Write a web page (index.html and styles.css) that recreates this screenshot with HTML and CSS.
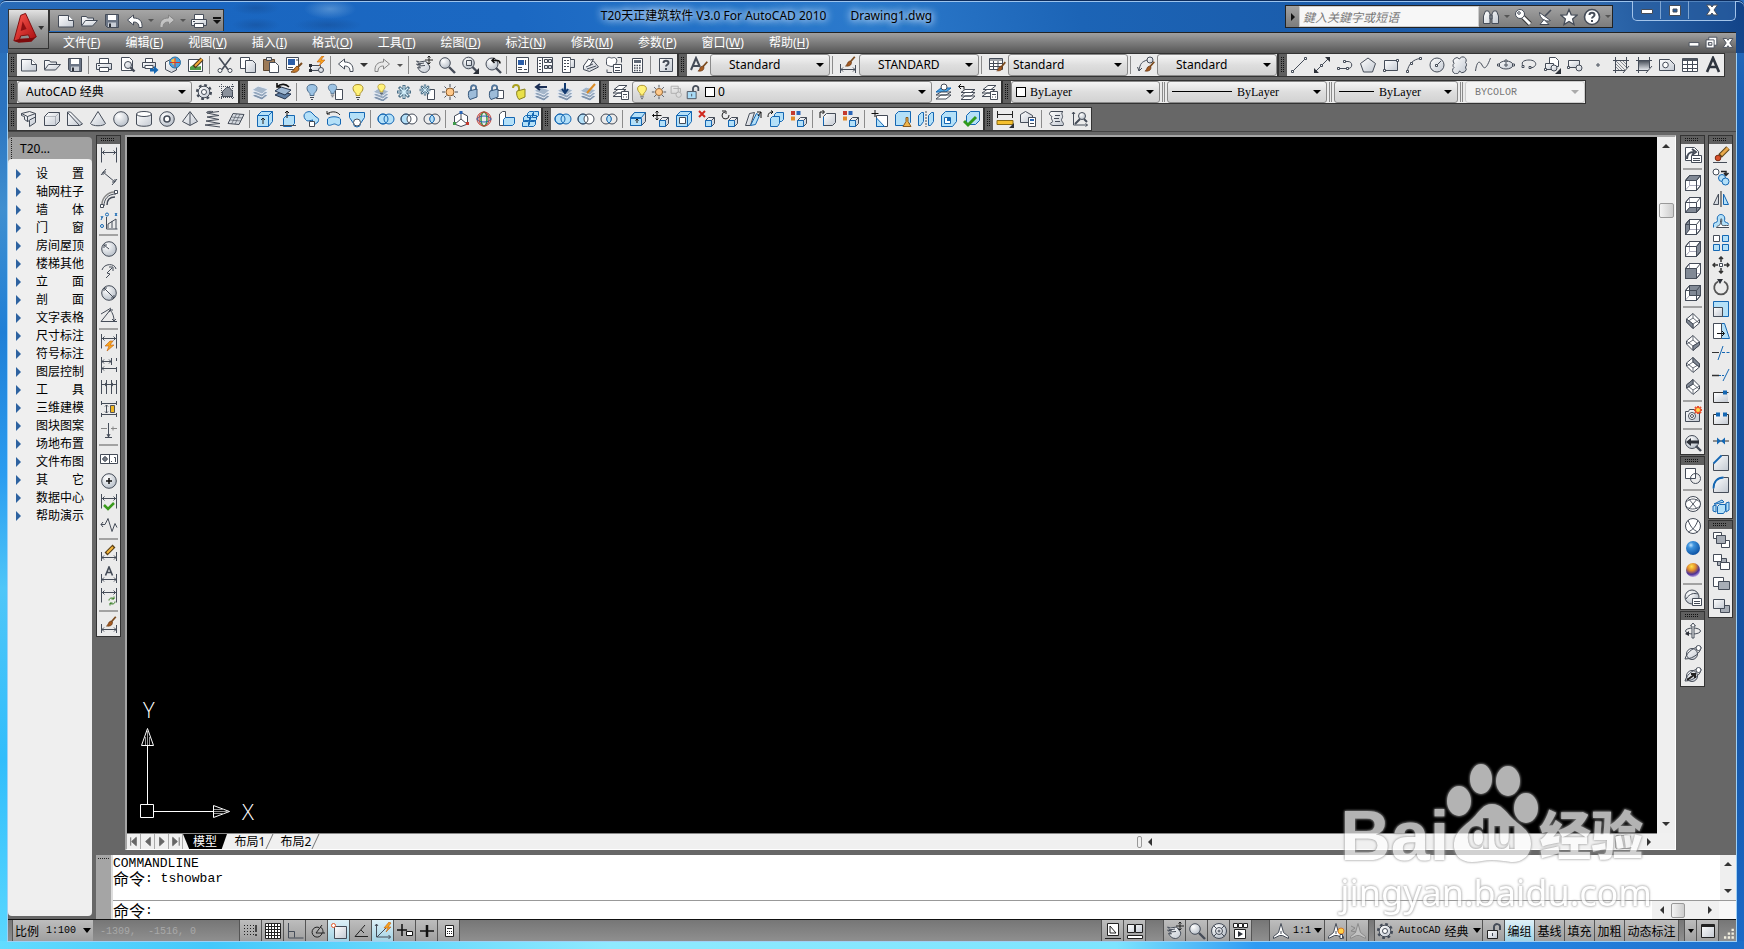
FILE: index.html
```html
<!DOCTYPE html>
<html lang="zh-CN">
<head>
<meta charset="utf-8">
<title>T20天正建筑软件 V3.0 For AutoCAD 2010</title>
<link rel="stylesheet" href="styles.css">
</head>
<body>
<svg class="defs" aria-hidden="true">
<defs>
<linearGradient id="gg" x1="0" y1="0" x2="1" y2="1"><stop offset="0" stop-color="#fff"/><stop offset="1" stop-color="#c3c9d2"/></linearGradient>
<linearGradient id="gd" x1="0" y1="0" x2="0" y2="1"><stop offset="0" stop-color="#4c535d"/><stop offset="1" stop-color="#e4e7ec"/></linearGradient>
<radialGradient id="gs" cx=".35" cy=".3" r=".7"><stop offset="0" stop-color="#fff"/><stop offset="1" stop-color="#bcc3cc"/></radialGradient>
<radialGradient id="gb" cx=".35" cy=".3" r=".7"><stop offset="0" stop-color="#bfe4ff"/><stop offset=".3" stop-color="#3d93dd"/><stop offset="1" stop-color="#0e55a6"/></radialGradient>
<radialGradient id="gy" cx=".4" cy=".25" r=".75"><stop offset="0" stop-color="#ffe14a"/><stop offset=".4" stop-color="#e08a2a"/><stop offset=".75" stop-color="#4b2f96"/><stop offset="1" stop-color="#b8a0e0"/></radialGradient>
<linearGradient id="gr" x1="0" y1="0" x2="1" y2="1"><stop offset="0" stop-color="#ff5a50"/><stop offset="1" stop-color="#a80d10"/></linearGradient>
</defs>
<symbol id="new" viewBox="0 0 18 18"><path class="g" d="M1.5 3.5h10l5 5v6.500h-15z"/><path class="w" d="M11.500 3.500v5h5"/></symbol>
<symbol id="open" viewBox="0 0 18 18"><path class="g" d="M1.500 13.500v-9h5l1 1.500h6v2.500"/><path class="g" d="M1.500 14l4-5.500h12l-5 5.500z"/></symbol>
<symbol id="save" viewBox="0 0 18 18"><path fill="#6b7585" d="M2.500 2.500h13v13h-11l-2-2z"/><path class="w" stroke="none" d="M5 3h8v5H5z"/><path fill="#c9ced6" stroke="none" d="M5 10.500h8V15H5z"/><path class="k" d="M6 11.500h2V15H6z"/></symbol>
<symbol id="print" viewBox="0 0 18 18"><path class="w" d="M4.500 7.500v-5h9v5"/><path class="g" d="M1.500 7.500h15v6h-15z"/><path class="w" d="M4.500 11.500h9v4h-9z"/><path d="M3 9.500h2"/></symbol>
<symbol id="preview" viewBox="0 0 18 18"><path class="w" d="M3.500 1.500h8l3 3v10h-11z"/><circle class="g" cx="10" cy="9" r="3.500"/><path class="th" d="M12.500 11.500l4 4"/></symbol>
<symbol id="plot" viewBox="0 0 18 18"><path class="w" d="M4.500 6.500v-4h7v4"/><path class="g" d="M1.500 6.500h13v5h-13z"/><path class="w" d="M4 9.500h8v3H4z"/><path class="bf" d="M9 12.500h4V10l4.500 4-4.500 4v-2.500H9z"/></symbol>
<symbol id="globe" viewBox="0 0 18 18"><path class="g" d="M1.500 6l6-3 5 2v9l-5 2.500-6-3z"/><circle cx="11" cy="6.500" r="5.500" fill="#4aa3df" stroke="#2b6f9f"/><path fill="#f6c244" stroke="none" d="M7 4l4-2 1 4-3 3z"/><path d="M11 2v9M6 6.500h10" stroke="#d23c2a"/></symbol>
<symbol id="markup" viewBox="0 0 18 18"><path class="w" d="M1.500 3.500h14v12h-14z"/><path fill="#4f9b45" stroke="none" d="M3 14v-3l3-2 3 2 5-1v4z"/><path stroke="#4b3a1e" stroke-width="4" d="M7 11l8-8"/><path stroke="#f5a935" stroke-width="2" d="M8 10l7-7"/></symbol>
<symbol id="cut" viewBox="0 0 18 18"><path stroke-width="1.600" d="M3 1.500l9 12M15 1.500l-9 12"/><circle class="w" cx="4" cy="14.500" r="2"/><circle class="w" cx="14" cy="14.500" r="2"/></symbol>
<symbol id="copy" viewBox="0 0 18 18"><path class="w" d="M1.500 1.500h9v11h-9z"/><path class="g" d="M6.500 4.500h7l3 3v9h-10z"/></symbol>
<symbol id="paste" viewBox="0 0 18 18"><path fill="#9c7a58" stroke="#5c4630" d="M1.500 3.500h11v11h-11z"/><path class="g" d="M4.500 1.500h5v3h-5z"/><path class="w" d="M7.500 6.500h6l3 3v7h-9z"/></symbol>
<symbol id="brush" viewBox="0 0 18 18"><path stroke="#7a4a1d" stroke-width="2.500" d="M17 1l-6 7"/><path fill="#a35a22" stroke="#5a3010" stroke-width=".8" d="M12.500 8.500c0 5-4 6-8.500 5.500 3-1 2-6 6-7z"/></symbol>
<symbol id="match" viewBox="0 0 18 18"><path class="w" d="M1.500 1.500h12v12h-12z"/><path fill="#2b5ea8" stroke="none" d="M3 3h7v6H3z"/><path d="M11 4h2M3 11.500h5"/><path stroke="#7a4a1d" stroke-width="2" d="M17 7l-4 4"/><path fill="#c87a2a" stroke="#7a4a1d" d="M14 12c0 4-4 5-8 4 3-1 3-4 6-6z"/></symbol>
<symbol id="bedit" viewBox="0 0 18 18"><path class="g" d="M2.500 9.500h10v5h-10z"/><circle class="g" cx="13" cy="14" r="2.500"/><path class="k" d="M1 8h3v3H1zM1 13h3v3H1z"/><path class="or" d="M14 0L9 6h4l-2 4 6-6h-4l3-4z"/></symbol>
<symbol id="undo" viewBox="0 0 18 18"><path class="w" d="M1.500 8l6-5v3c6 0 9 3 8.500 9.500h-3c0-4-2-5.500-5.500-5.500v3z"/></symbol>
<symbol id="redo" viewBox="0 0 18 18"><path fill="#e6e6e6" fill-opacity=".6" stroke="#858585" d="M16.500 8l-6-5v3c-6 0-9 3-8.500 9.500h3c0-4 2-5.500 5.500-5.500v3z"/></symbol>
<symbol id="pan" viewBox="0 0 18 18"><path class="g" d="M1.500 5l3 1 6-1 4 5c1 3-2 6.500-5 6.500-4 0-5-2-7-5l3 .5-4-4 4 1z"/><path d="M3 8l6-1M4 10l6-.500"/><path stroke="#222" d="M14 0v8M10 4h8M12.500 1.500L14 0l1.500 1.500M12.500 6.500L14 8l1.500-1.500"/></symbol>
<symbol id="zoom" viewBox="0 0 18 18"><circle class="s" cx="7" cy="7" r="5.300"/><path class="th" stroke-width="3" d="M11 11l6 6"/></symbol>
<symbol id="zoomw" viewBox="0 0 18 18"><circle class="s" cx="7.500" cy="7" r="5.800"/><path d="M5.500 4.500h5v5h-5z"/><path class="th" d="M11.500 11l4 4"/><path class="k" d="M18 12v6h-6z"/></symbol>
<symbol id="zoomp" viewBox="0 0 18 18"><circle class="s" cx="8" cy="8" r="6"/><path class="th" d="M12 12l5 5"/><path stroke="#111" stroke-width="1.500" d="M8 4.500h5c2 0 3 1 3 3M10.500 2L8 4.500 10.500 7"/></symbol>
<symbol id="props" viewBox="0 0 18 18"><path class="w" d="M3.500 1.500h12v15h-12z"/><path fill="#2b5ea8" stroke="none" d="M5 4h6v5H5z"/><path d="M12.500 4v5M5 11.500h4M5 13.500h4M11 13.500h3"/></symbol>
<symbol id="dc" viewBox="0 0 18 18"><path class="w" d="M1.500 1.500h15v15h-15z"/><path d="M6.500 2v14M3 4.500h2M3 7.500h2M3 10.500h2M3 13.500h2"/><path class="g" d="M8.500 3.500h3v3h-3zM12.500 3.500h3v3h-3zM8.500 9.500h3v3h-3zM12.500 9.500h3v3h-3z"/></symbol>
<symbol id="tp" viewBox="0 0 18 18"><path class="w" d="M3.500 1.500h8v15h-8z"/><path class="g" d="M11.500 3.500h4v8h-4"/><path d="M5 4.500h2M8 4.500h2M5 7.500h2M8 7.500h2M5 10.500h2M8 10.500h2M5 13.500h2"/></symbol>
<symbol id="ss" viewBox="0 0 18 18"><path class="g" d="M1.500 10l10-5 5 6-9 4.500-6-2z"/><path class="w" d="M1.500 10l5-7 2 1 3-1-4 7"/><path d="M4 11l7-3M5 13l9-3"/></symbol>
<symbol id="ms" viewBox="0 0 18 18"><path class="w" d="M1.500 3c2-3 4-1 5-1s3-1 4 0 2 3 1 4 0 4-2 4-3 1-5 0-3 0-3-3 0-3 0-4z"/><path class="w" d="M8.500 8.500h8v8h-8z"/><path d="M10 11.500h5M10 14.500h5M12.500 1.500h4v5M2 13.500v3h5"/></symbol>
<symbol id="calc" viewBox="0 0 18 18"><path class="w" d="M4.500 2.500h10v14h-10z"/><path fill="#5f6876" stroke="none" d="M6 4h7v3H6z"/><path stroke-dasharray="1.500 1" stroke-width="1.500" d="M6 9.500h7M6 12h7M6 14.500h7"/></symbol>
<symbol id="qp" viewBox="0 0 18 18"><path class="w" stroke="#222" d="M5.500 3.500h8v11h-8z"/><path stroke="#222" d="M7 6.500h5"/><path stroke="#222" stroke-dasharray="1 1" d="M7 9.500h5M7 11.500h5"/></symbol>
<symbol id="help" viewBox="0 0 18 18"><path class="g" d="M2.500 2.500h13v13h-13z"/><path stroke-width="2" d="M6.500 7c0-3 5-3 5 0 0 1.500-2.500 2-2.500 3.500M9 12v2"/></symbol>
<symbol id="tstyle" viewBox="0 0 18 18"><path stroke-width="2" d="M1 14L6 2l4 9M3 10h6"/><use href="#brush" x="5" y="5" width="13" height="13"/></symbol>
<symbol id="dstyle" viewBox="0 0 18 18"><path d="M1.500 8v9M16.500 9v8M2 13.500h14M4 11.500l-2 2 2 2M14 11.500l2 2-2 2"/><use href="#brush" x="3" y="0" width="14" height="13"/></symbol>
<symbol id="tbstyle" viewBox="0 0 18 18"><path class="w" d="M1.500 2.500h13v11h-13z"/><path d="M2 4h12M2 7.500h12M2 10.500h12M5.500 5v8M10 5v8"/><use href="#brush" x="6" y="5" width="12" height="13"/></symbol>
<symbol id="mlstyle" viewBox="0 0 18 18"><path d="M2 15c1-8 3-9 8-11M.500 11L2 15l3-3"/><circle class="g" cx="13" cy="4" r="3"/><use href="#brush" x="5" y="5" width="13" height="13"/></symbol>
<symbol id="line" viewBox="0 0 18 18"><path d="M3 15L15 3"/><path class="w" d="M1.500 14.500h2v2h-2zM14.500 1.500h2v2h-2z"/></symbol>
<symbol id="xline" viewBox="0 0 18 18"><path d="M3 15L15 3"/><path class="k" d="M1 17v-5l5 5zM17 1v5l-5-5z"/><path class="w" d="M7.500 8.500h2v2h-2z"/></symbol>
<symbol id="pline" viewBox="0 0 18 18"><path d="M8 5.500h4c5 0 5 7 0 7H2"/><path class="w" d="M1.500 11.500h2v2h-2zM10.500 11.500h2v2h-2zM7.500 4.500h2v2h-2z"/></symbol>
<symbol id="polygon" viewBox="0 0 18 18"><path class="g" d="M9 2l7.500 5.500-3 8.500h-9l-3-8.500z"/></symbol>
<symbol id="rect" viewBox="0 0 18 18"><path class="g" d="M2.500 4.500h13v10h-13z"/><path class="w" d="M1.500 13.500h2v2h-2zM14.500 3.500h2v2h-2z"/></symbol>
<symbol id="arc" viewBox="0 0 18 18"><path d="M2.500 15C3 9 8 3 15.500 2.500"/><path class="w" d="M1.500 14.500h2v2h-2zM5.500 6.500h2v2h-2zM14.500 1.500h2v2h-2z"/></symbol>
<symbol id="circle" viewBox="0 0 18 18"><circle class="g" cx="9" cy="9" r="7"/><path d="M9 9l4-4"/><path class="w" d="M7.500 8.500h2v2h-2z"/></symbol>
<symbol id="cloud" viewBox="0 0 18 18"><path class="g" d="M8.500 3a3.500 3.500 0 1 0-5.500 4.500 2.500 2.500 0 0 0 0 4 3.500 3.500 0 1 0 5.500 3.500 3.500 3.500 0 1 0 6-4 3 3 0 0 0 0-4.500 3.500 3.500 0 1 0-6-3.500z"/></symbol>
<symbol id="spline" viewBox="0 0 18 18"><path d="M1.500 15C3 4 6 5 8 9s4 5 8.500-7"/></symbol>
<symbol id="ellipse" viewBox="0 0 18 18"><ellipse class="g" cx="9" cy="9" rx="7" ry="4"/><path class="w" d="M.500 8h2v2h-2zM15.500 8h2v2h-2zM8 4h2v2H8zM8 8h2v2H8z"/></symbol>
<symbol id="ellarc" viewBox="0 0 18 18"><path d="M3 10C0 5 6 4 9 4c9 0 9 8 0 8"/><path class="w" d="M2 9.500h2v2H2zM9 10.500h2v2H9z"/></symbol>
<symbol id="insert" viewBox="0 0 18 18"><path class="w" d="M6.500 1.500h6l3 3v6h-9z"/><path class="g" d="M2.500 7.500h8v6h-8z"/><circle class="g" cx="11" cy="12" r="3"/><path class="w" d="M1.500 12.500h2v2h-2z"/><path class="k" d="M18 12v6h-6z"/></symbol>
<symbol id="block" viewBox="0 0 18 18"><path class="g" d="M2.500 4.500h11v7h-11z"/><circle class="g" cx="13" cy="12" r="3"/><path class="w" d="M1.500 10.500h2v2h-2z"/></symbol>
<symbol id="point" viewBox="0 0 18 18"><path class="w" d="M8 8h2v2H8z"/></symbol>
<symbol id="hatch" viewBox="0 0 18 18"><path d="M3.500 1v16M1 4.500h16M14.500 1v11M1 14.500h12"/><path stroke-width=".6" d="M4 8l6 6M4 5l9 9M8 5l6 6M4 11l3 3M11 5l3 3"/><path d="M11 17l6-7"/></symbol>
<symbol id="grad" viewBox="0 0 18 18"><path fill="url(#gd)" stroke="none" d="M4 5h10v9H4z"/><path d="M3.500 1v16M1 4.500h16M14.500 1v11M1 14.500h12M11 17l6-7"/></symbol>
<symbol id="region" viewBox="0 0 18 18"><path class="g" d="M1.500 3.500h10l5 5v6h-15z"/><circle class="w" cx="7.500" cy="9" r="2.800"/></symbol>
<symbol id="table" viewBox="0 0 18 18"><path class="w" d="M1.500 2.500h15v13h-15z"/><path fill="#4c535d" stroke="none" d="M2 2h14v3H2z"/><path d="M2 8.500h14M2 12.500h14M6.500 5v10M11.500 5v10"/></symbol>
<symbol id="mtext" viewBox="0 0 18 18"><path stroke="#2e343d" stroke-width="2.600" d="M3 16L9 2l6 14M5 11h8"/></symbol>
<symbol id="gear" viewBox="0 0 18 18"><circle cx="9" cy="9" r="6.800" stroke-width="2.500" stroke-dasharray="2.700 2.640"/><circle class="g" cx="9" cy="9" r="5.800"/><circle class="w" cx="9" cy="9" r="2.500"/></symbol>
<symbol id="wss" viewBox="0 0 18 18"><path stroke-dasharray="1 1" d="M3.500 1v16M14.500 1v16M1 3.500h16M1 14.500h16"/><path fill="#8a919c" d="M4.500 13.500v-5l4-4h3l3 4v5z"/></symbol>
<symbol id="layers" viewBox="0 0 18 18"><path fill="#7f93ab" stroke="#e8edf4" d="M1 13l6-4 10 3-6 5z"/><path fill="#92a6bd" stroke="#e8edf4" d="M1 10l6-4 10 3-6 5z"/><path fill="#a4b6ca" stroke="#e8edf4" d="M1 7l6-4 10 3-6 5z"/></symbol>
<symbol id="lay2" viewBox="0 0 18 18"><path fill="#5f7ea3" stroke="#273750" d="M1 12l6-3 10 2-6 5z"/><path fill="#9fb8d2" stroke="#273750" d="M1 8l6-4 10 3-6 5z"/><path stroke="#111" stroke-width="1.600" d="M3 4c4-4 9-3 12 0M3 0v4h4"/></symbol>
<symbol id="bulb" viewBox="0 0 18 18"><path fill="#9cc3e4" stroke="#4c6c8b" d="M9 1.500c6 0 6 5 3 8-1 1-1 1-1 3H7c0-2 0-2-1-3-3-3-3-8 3-8z"/><path d="M7 14.500h4M8 16.500h2"/></symbol>
<symbol id="bulb2" viewBox="0 0 18 18"><path class="w" d="M9.500 6.500h7v10h-7z"/><use href="#bulb" x="-1" width="15" height="15"/></symbol>
<symbol id="bulby" viewBox="0 0 18 18"><path fill="#fff27a" stroke="#a88f2a" d="M9 1.500c6 0 6 5 3 8-1 1-1 1-1 3H7c0-2 0-2-1-3-3-3-3-8 3-8z"/><path d="M7 14.500h4M8 16.500h2"/></symbol>
<symbol id="bulbl" viewBox="0 0 18 18"><use href="#layers" y="2" width="18" height="18"/><use href="#bulby" x="3" y="0" width="13" height="13"/></symbol>
<symbol id="frz" viewBox="0 0 18 18"><path stroke="#4c6f86" stroke-width="3" d="M9 2v14M2 9h14M4 4l10 10M14 4L4 14"/><path stroke="#d6f0fb" stroke-width="1.200" d="M9 3v12M3 9h12M5 5l8 8M13 5l-8 8"/></symbol>
<symbol id="frz2" viewBox="0 0 18 18"><path class="w" d="M9.500 6.500h7v10h-7z"/><use href="#frz" width="14" height="14"/></symbol>
<symbol id="sun" viewBox="0 0 18 18"><circle fill="#ffc98a" stroke="#8a5a2a" cx="9" cy="9" r="4"/><path d="M9 1v3M9 14v3M1 9h3M14 9h3M3.500 3.500l2 2M12.500 12.500l2 2M14.500 3.500l-2 2M5.500 12.500l-2 2"/></symbol>
<symbol id="lock" viewBox="0 0 18 18"><path stroke="#55779a" stroke-width="2" d="M7 8V5c0-4 6-3 5 0v3"/><path fill="#9dbcd9" stroke="#35567a" d="M5 8l8-2v8l-7 2.500c-2-2-2-6-1-8.500z"/></symbol>
<symbol id="lock2" viewBox="0 0 18 18"><path class="w" d="M9.500 7.500h7v8h-7z"/><use href="#lock" x="-2" width="18" height="18"/></symbol>
<symbol id="unlock" viewBox="0 0 18 18"><path stroke="#a9a020" stroke-width="2" d="M9 8V5c0-4-6-4-6 0"/><path fill="#e9e04a" stroke="#8a8320" d="M7 8l8-2v8l-6 2.500c-2-2-3-6-2-8.500z"/></symbol>
<symbol id="layl" viewBox="0 0 18 18"><use href="#layers" y="1" width="18" height="18"/><path stroke="#1c2f55" stroke-width="2" d="M3 4h11M7 1L3 4l4 3"/></symbol>
<symbol id="layd" viewBox="0 0 18 18"><use href="#layers" y="1" width="18" height="18"/><path stroke="#123a70" stroke-width="2" d="M9 0v9M6 6l3 4 3-4"/></symbol>
<symbol id="laye" viewBox="0 0 18 18"><use href="#layers" y="1" width="18" height="18"/><path stroke="#d98a24" stroke-width="2" d="M16 1L8 10"/></symbol>
<symbol id="layp" viewBox="0 0 18 18"><path class="w" d="M2 6.500l5-4h8l-5 4zM1 10l5-3.500h8L9 10zM1 13.500L6 10h8l-5 3.500z"/><path class="w" d="M9.500 8.500h7v8h-7z"/><path d="M11 11.500h4M11 14h1M14 14h1"/></symbol>
<symbol id="layc" viewBox="0 0 18 18"><path fill="#4aa6e6" stroke="#1467b3" d="M1 9l5-4h10l-5 4z"/><path class="w" d="M1 12l5-3h10l-5 3zM1 16l5-4h10l-5 4z"/><circle class="w" cx="9" cy="4" r="3"/></symbol>
<symbol id="layb" viewBox="0 0 18 18"><path class="w" d="M3 9.500l4-3h10l-4 3zM3 13l4-3.500h10L13 13zM3 16.500L7 13h10l-4 3.500z"/><path stroke="#111" d="M1 3.500h5v3M3 1L.500 3.500 3 6"/></symbol>
<symbol id="plock" viewBox="0 0 18 18"><path stroke-width="2" d="M9 8V5c0-4 7-4 6 1v2"/><path fill="#a9dcf7" d="M2.500 8.500h10v8h-10z"/><path d="M7.500 11v3"/></symbol>
<symbol id="ulock" viewBox="0 0 18 18"><path stroke-width="2" d="M9 8V5c0-4 7-4 6 1v2"/><path class="g" stroke="#222" d="M2.500 8.500h10v8h-10z"/><path d="M7.500 11v3"/></symbol>
<symbol id="vp" viewBox="0 0 18 18"><path stroke="#aaa" d="M3.500 2.500h8v8h-8zM6 5h8v4"/><circle fill="#ddd" stroke="#aaa" cx="12" cy="12" r="3"/></symbol>
<symbol id="psolid" viewBox="0 0 18 18"><path class="g" d="M1.500 3.500l6 3v5l-3-2v-3l-3-1zM7.500 6.500l8-3v9l-6 4v-6l-2 1z"/><path d="M1.500 3.500l8-2 6 2M9.500 10l6-3"/></symbol>
<symbol id="box" viewBox="0 0 18 18"><path class="g" d="M1.500 6.500l4-4h11v9l-4 4h-11z"/><path d="M1.500 6.500h11v9M12.500 6.500l4-4" opacity=".3"/></symbol>
<symbol id="wedge" viewBox="0 0 18 18"><path class="g" d="M1.500 2l3 0 12 12-3 1.500h-12z"/><path d="M1.500 2.500l12 13"/></symbol>
<symbol id="cone" viewBox="0 0 18 18"><path class="g" d="M9 1.500l7.500 12c-2 3-13 3-15 0z"/></symbol>
<symbol id="sphere" viewBox="0 0 18 18"><circle class="s" cx="9" cy="9" r="7.300"/></symbol>
<symbol id="cyl" viewBox="0 0 18 18"><path class="g" d="M1.500 4v10c0 3 15 3 15 0V4"/><ellipse class="w" cx="9" cy="4" rx="7.500" ry="2.500"/></symbol>
<symbol id="torus" viewBox="0 0 18 18"><circle class="s" cx="9" cy="9" r="7.300"/><circle class="w" cx="9" cy="9" r="3" stroke-width="1.600"/></symbol>
<symbol id="pyr" viewBox="0 0 18 18"><path class="g" d="M9 1.500l7.500 10L9 15.500l-7.500-4z"/><path d="M9 2v13"/></symbol>
<symbol id="helix" viewBox="0 0 18 18"><path d="M15 1.500L3 3l12 2.500L3 7l12 2.500L2 11l14 2.500L1 15l15 2M3 3c-1-1 0-2 6-1.500"/></symbol>
<symbol id="mesh" viewBox="0 0 18 18"><path fill="#d5dae0" d="M6 3.500l11 1-5 10-11-1z"/><path stroke-width=".6" d="M4.500 7l11 1M3 10l11 1M9.500 4l-5 10M13 4l-5 10"/></symbol>
<symbol id="ext" viewBox="0 0 18 18"><path class="b c" d="M1.500 5.500l4-4h11v10l-4 5h-11z"/><path class="b" d="M1.500 5.500h11v11M12.500 5.500l4-4"/><path stroke="#222" d="M7 14V8M5 10l2-2 2 2"/></symbol>
<symbol id="ppull" viewBox="0 0 18 18"><path class="b c" d="M4.500 8.500l3-3h8v8l-3 3h-8z"/><path d="M1 15.500h16"/><path stroke="#111" d="M8 8V1M6 3l2-2 2 2"/></symbol>
<symbol id="sweep" viewBox="0 0 18 18"><path class="b c" d="M2 6c0-4 5-5 7-4l5 5c3 1 3 3 2 5l-4 3-3-3 2-2-5 1c-2 0-4-3-4-5z"/><path class="w" d="M7.500 11.500h5v5h-5z"/></symbol>
<symbol id="rev" viewBox="0 0 18 18"><path class="b c" d="M2.500 9c2-3 11-3 13 0v5c-2 3-4 0-6 0s-6 3-7 0z"/><path stroke="#222" d="M2 4c4-3 10-3 13 1M2 1v3h3"/></symbol>
<symbol id="loft" viewBox="0 0 18 18"><path class="b c" d="M1.500 2.500h15v5l-4 6a3.500 3.500 0 0 1-7 0l-4-6z"/><circle class="w" cx="9" cy="12.500" r="3.500"/></symbol>
<symbol id="union" viewBox="0 0 18 18"><circle class="b c" cx="6" cy="9" r="5"/><circle class="b c" cx="12" cy="9" r="5"/><circle class="b" cx="6" cy="9" r="5"/></symbol>
<symbol id="sub" viewBox="0 0 18 18"><circle class="b c" cx="6" cy="9" r="5"/><circle class="w" cx="12" cy="9" r="5"/><circle cx="6" cy="9" r="5"/></symbol>
<symbol id="inter" viewBox="0 0 18 18"><circle cx="6" cy="9" r="5"/><circle cx="12" cy="9" r="5"/><path class="b c" d="M9 5c3 2 3 6 0 8-3-2-3-6 0-8z"/></symbol>
<symbol id="m3d" viewBox="0 0 18 18"><path class="w" d="M9 2.500l6.500 3.500v8L9 16.500 2.500 14V6z"/><path d="M9 3v6l-6 5M9 9l6 5"/><path fill="#2a66b8" stroke="none" d="M7.500 1h3v3h-3z"/><path fill="#c43a2e" stroke="none" d="M14 12h3v3h-3z"/><path fill="#3d9a4a" stroke="none" d="M1 12h3v3H1z"/></symbol>
<symbol id="r3d" viewBox="0 0 18 18"><circle cx="9" cy="9" r="7" stroke="#c43a2e"/><ellipse cx="9" cy="9" rx="3" ry="7" stroke="#3d9a4a" stroke-width="1.500"/><ellipse cx="9" cy="9" rx="7" ry="3" stroke="#2a66b8"/><ellipse cx="9" cy="9" rx="5" ry="7" stroke="#c43a2e"/></symbol>
<symbol id="a3d" viewBox="0 0 18 18"><path class="w" d="M1.500 4l3-2.500h3V11h8l-2 4.500h-12z"/><path class="b c" d="M5.500 9.500l2-2h9v6l-2 2h-9z"/></symbol>
<symbol id="ar3d" viewBox="0 0 18 18"><g class="b c"><path d="M6.500 3.500l2-2h4v4l-2 2h-4zM11.500 3.500l2-2h4v4l-2 2h-4zM2.500 7.500l2-2h5v4l-2 2h-5zM8.500 7.500l2-2h5v4l-2 2h-5zM1.500 12.500l2-2h5v4l-2 2h-5zM7.500 12.500l2-2h5v4l-2 2h-5z"/></g></symbol>
<symbol id="scube" viewBox="0 0 18 18"><path class="g" d="M7.500 10.500l3-3h6v6l-3 3h-6z"/><path class="b c" d="M7.500 10.500h6v6h-6z"/><path d="M13.500 10.500l3-3"/></symbol>
<symbol id="fext" viewBox="0 0 18 18"><path class="g" d="M1.500 7.500l4-5h11v9l-4 4h-11z"/><path class="b c" d="M1.500 8.500h11v7h-11zM1.500 7.500l4-5h11l-4 5z"/><path stroke="#111" d="M8 13V9M6.500 10.500L8 9l1.500 1.500"/></symbol>
<symbol id="fmove" viewBox="0 0 18 18"><use href="#scube" width="18" height="18"/><path stroke="#111" d="M5 1v9M.500 5.500h9M3.500 2.500L5 1l1.500 1.500M3.500 8.500L5 10l1.500-1.500M2 4L.500 5.500 2 7"/></symbol>
<symbol id="foff" viewBox="0 0 18 18"><path class="b c" d="M1.500 5.500l4-4h11v10l-4 5h-11z"/><path class="w" d="M4.500 7.500h6v6h-6z"/><path class="b" d="M1.500 5.500h11v11M12.500 5.500l4-4"/></symbol>
<symbol id="fdel" viewBox="0 0 18 18"><use href="#scube" width="18" height="18"/><path stroke="#d0281e" stroke-width="2" d="M1 1l6 6M7 1L1 7"/></symbol>
<symbol id="frot" viewBox="0 0 18 18"><use href="#scube" width="18" height="18"/><path stroke="#222" d="M4 2a3.500 3.500 0 1 0 4 3M1 1h4v3"/></symbol>
<symbol id="ftap" viewBox="0 0 18 18"><path class="g" d="M1.500 15.500l4-12 5-1-4 13z"/><path class="b c" d="M6.500 15.500l6-12 3 2-4 9z"/><path stroke="#111" d="M17 8V2h-4M17 2l-3 4"/></symbol>
<symbol id="fcopy" viewBox="0 0 18 18"><path class="b c" d="M7.500 4.500l2-2h7v7l-2 2h-7z"/><path class="b c" d="M3.500 8.500l2-2h7v7l-2 3h-7z"/><path stroke="#111" d="M1 7c0-4 2-5 5-5M4 .500L6 2 4 4"/></symbol>
<symbol id="fcol" viewBox="0 0 18 18"><use href="#scube" width="18" height="18"/><path fill="#c43a2e" stroke="none" d="M1 1h4v4H1z"/><path fill="#2a66b8" stroke="none" d="M6.500 1h4v4h-4z"/><path fill="#e08a2a" stroke="none" d="M1 6.500h4v4H1z"/></symbol>
<symbol id="ecopy" viewBox="0 0 18 18"><path class="g" d="M4.500 6.500l3-3h9v9l-3 3h-9z"/><path class="b" d="M4.500 7v9"/><path stroke="#111" d="M1 8V2h4M3.500 0l2 2-2 2"/></symbol>
<symbol id="impr" viewBox="0 0 18 18"><path class="w" d="M5.500 5.500h11v11h-11z"/><path class="b c" d="M5.500 8l8 8.500h-8z"/><path stroke="#111" d="M4 0v7M.500 3.500h7"/></symbol>
<symbol id="clean" viewBox="0 0 18 18"><path class="b c" d="M1.500 4.500l3-3h12v11l-3 3h-12z"/><path stroke="#8a5a1e" fill="#f0b54a" d="M12 7.500h2v4l3 5H9l3-5z"/></symbol>
<symbol id="sep3" viewBox="0 0 18 18"><path class="b c" d="M1.500 5.500l3-3h2v9l-3 4h-2zM11.500 5.500l3-3h2v9l-3 4h-2z"/><path stroke-dasharray="2 1" d="M9 1v16"/></symbol>
<symbol id="shell" viewBox="0 0 18 18"><path class="b c" d="M1.500 5.500l4-4h11v10l-4 5h-11z"/><path class="w b" d="M4.500 7.500h6v6h-6z"/><path fill="#1467b3" stroke="none" d="M7 8h3v3H7z"/></symbol>
<symbol id="chk3" viewBox="0 0 18 18"><path class="b c" d="M3.500 5.500l4-4h9v9l-4 4h-9z"/><path stroke="#2f9a1c" stroke-width="3" d="M1 11l4 4 8-8"/></symbol>
<symbol id="dist" viewBox="0 0 18 18"><path stroke="#222" d="M1.500 1v7M16.500 1v7M2 4.500h14"/><path fill="#f5c02e" stroke="#8a6a12" d="M1 10.500h16v4H1z"/><path class="k" d="M18 13v5h-5z"/></symbol>
<symbol id="mreg" viewBox="0 0 18 18"><path class="g" d="M1.500 12.500v-8l5-3 7 4v7z"/><path class="w" d="M9.500 7.500h7v9h-7z"/><path fill="#2a66b8" stroke="none" d="M11 9h4v2h-4z"/><path d="M11 13.500h4"/></symbol>
<symbol id="list" viewBox="0 0 18 18"><path class="g" d="M3 1.500h12c-3 2 1 4-1 7s3 4 1 7H5c-4-1-3-3-1-3 2-2-2-3 0-6-2-1-4-3-1-5z"/><path d="M7 5.500h5M6 8.500h5M7 11.500h5"/></symbol>
<symbol id="idp" viewBox="0 0 18 18"><path d="M2.500 2v13h14M1 4l1.500-2L4 4M14.500 13.500l2 1.500-2 1.500"/><circle class="s" cx="11" cy="6" r="3.500"/><path stroke-width="2" d="M9 9l-5 5M13 9l3 3"/></symbol>
<symbol id="dim" viewBox="0 0 18 18"><path d="M1.500 1.500v15M16.500 1.500v15"/><path d="M2 6.500h14M4.500 4.500l-2 2 2 2M13.500 4.500l2 2-2 2"/></symbol>
<symbol id="dal" viewBox="0 0 18 18"><path d="M3 4l12 10M1 7l5-6M12 17l5-6M3 7V4h3M15 11v3h-3"/></symbol>
<symbol id="darc" viewBox="0 0 18 18"><path stroke="#888" stroke-width="1.500" d="M2 14C2 8 8 2 14 2"/><path stroke-width="1.500" d="M7 15c0-5 3-8 8-8"/><path d="M4 16c0-7 4-12 12-12"/><path class="w" d="M.500 14.500h3v3h-3zM14.500.500h3v3h-3z"/></symbol>
<symbol id="dord" viewBox="0 0 18 18"><path d="M6.500 5v12h11M8 12l8-5v10M12 9v7M8 12v4"/><path class="b" d="M1 4l1 2M3 4l-2 4M15 1l2 3M17 1l-2 3"/><circle class="b" cx="2" cy="14" r="1.500"/><circle class="b" cx="7" cy="2.500" r="1.500"/></symbol>
<symbol id="drad" viewBox="0 0 18 18"><circle class="s" cx="9" cy="9" r="7.300"/><path d="M9 9L4 5M4 8V5h3"/></symbol>
<symbol id="djog" viewBox="0 0 18 18"><path d="M2 8c2-7 13-7 14-1M6 16l4-4-3-1 5-5M9 5h4v4"/></symbol>
<symbol id="ddia" viewBox="0 0 18 18"><circle class="s" cx="9" cy="9" r="7.300"/><path d="M4 4l10 10M4 7V4h3M14 11v3h-3"/></symbol>
<symbol id="dang" viewBox="0 0 18 18"><path d="M1 8l10-6M17 15.500H1L11 3M10 4c3 3 4 7 4 11M9 6l1-2h3M12 13l2 2 2-2"/></symbol>
<symbol id="dq" viewBox="0 0 18 18"><use href="#dim" y="-2" width="18" height="18"/><path class="or" d="M10 7l-5 5h4l-2 5 7-6h-4l3-4z"/></symbol>
<symbol id="dbase" viewBox="0 0 18 18"><path d="M1.500 1v16M11.500 2v7M16.500 2v3M16.500 11v5M2 5.500h9M2 12.500h14M4 3.500l-2 2 2 2M9 3.500l2 2-2 2M4 10.500l-2 2 2 2"/></symbol>
<symbol id="dcont" viewBox="0 0 18 18"><path d="M1.500 2v14M6.500 2v14M11.500 2v14M16.500 2v14M2 6.500h14M5 5l2 1.500L5 8M13 5l-2 1.500L13 8"/></symbol>
<symbol id="dspc" viewBox="0 0 18 18"><path d="M1.500 1v4M16.500 1v4M1.500 13v4M16.500 13v4M2 3.500h14M2 14.500h14M6.500 5v8M5 6.500L6.500 5 8 6.500M5 11.500L6.500 13 8 11.500"/><path fill="#f0b51e" stroke="#555" d="M10.500 5.500h4v7h-4z"/></symbol>
<symbol id="dbrk" viewBox="0 0 18 18"><path stroke="#888" d="M1 6.500h6M11 6.500h6M13 4.500v4"/><path d="M8.500 1v15M5 15.500h7M7 12l1.500 3 1.500-3"/></symbol>
<symbol id="tol" viewBox="0 0 18 18"><path class="w" d="M.500 4.500h17v9H.500z"/><path d="M9.500 5v8M2 9h6M5 6v6"/><circle cx="5" cy="9" r="2"/><path d="M11.500 11v1M14 7.500h1.500V12"/></symbol>
<symbol id="cmark" viewBox="0 0 18 18"><circle class="s" cx="9" cy="9" r="7.300"/><path stroke="#111" stroke-width="1.500" d="M9 6v6M6 9h6"/></symbol>
<symbol id="dins" viewBox="0 0 18 18"><use href="#dim" y="-2" width="18" height="18"/><path stroke="#3a9a1c" stroke-width="2.500" d="M4 11l4 4 6-6"/></symbol>
<symbol id="djl" viewBox="0 0 18 18"><path d="M1 8.500h4l3-6 4 13 3-8 2 4M3 6L1 8.500 3 11"/></symbol>
<symbol id="ded" viewBox="0 0 18 18"><path d="M1.500 8v9M16.500 8v9M2 13.500h14M4 11.500l-2 2 2 2M14 11.500l2 2-2 2"/><path stroke="#5a4016" stroke-width="4" d="M6 10l8-8"/><path stroke="#f5b53a" stroke-width="2" d="M7 9l6-6"/></symbol>
<symbol id="dtx" viewBox="0 0 18 18"><path d="M1.500 8v9M16.500 8v9M2 13.500h14M4 11.500l-2 2 2 2M14 11.500l2 2-2 2"/><path stroke-width="1.600" d="M5.500 9.500L9 1l3.500 8.500M7 6.500h4"/></symbol>
<symbol id="dup" viewBox="0 0 18 18"><use href="#dim" y="-2" width="18" height="18"/><path stroke="#2f7a1c" d="M9 12.500c0-3 4-3 5-1.500M15 13.500c0 3-4 3-5 1.500M14 8.500V11h-2.500M10 17.500V15h2.500"/></symbol>
<symbol id="vw" viewBox="0 0 18 18"><path class="w" d="M1.500 1.500h9l4 4v9h-13z"/><path stroke-width="2" d="M3 13c0-6 3-7 7-7M8 3l4 3-4 3"/><path class="w" d="M7.500 9.500h10v7h-10z"/><path d="M9 12.500h7M9 14.500h7"/></symbol>
<symbol id="cb" viewBox="0 0 18 18"><path class="w" d="M1.500 6.500l4-5h11v10l-4 5h-11z"/><path stroke="#aab" d="M5.500 2v9.500h11M1.500 16l4-4.500"/></symbol>
<symbol id="cl" viewBox="0 0 18 18"><path d="M1.500 6.500h11v10h-11zM1.500 6.500l4-5h11v10l-4 5M12.500 6.500l4-5"/></symbol>
<symbol id="cvt" viewBox="0 0 18 18"><use href="#cb"/><path class="m" d="M1.500 6.500l4-5h11l-4 5z"/><use href="#cl"/></symbol>
<symbol id="cvb" viewBox="0 0 18 18"><use href="#cb"/><path class="m" d="M1.500 16.500l4-5h11l-4 5z"/><use href="#cl"/></symbol>
<symbol id="cvl" viewBox="0 0 18 18"><use href="#cb"/><path class="m" d="M1.500 6.500l4-5v10l-4 5z"/><use href="#cl"/></symbol>
<symbol id="cvr" viewBox="0 0 18 18"><use href="#cb"/><path class="m" d="M12.500 6.500l4-5v10l-4 5z"/><use href="#cl"/></symbol>
<symbol id="cvf" viewBox="0 0 18 18"><use href="#cb"/><path class="m" d="M1.500 6.500h11v10h-11z"/><use href="#cl"/></symbol>
<symbol id="cvk" viewBox="0 0 18 18"><use href="#cb"/><path class="m" d="M5.500 1.500h11v10h-11z"/><use href="#cl"/></symbol>
<symbol id="iso" viewBox="0 0 18 18"><path class="w" d="M9 1.500L15.500 8v3L9 16.500 2.500 10V7z"/><path d="M2.500 7L9 12l6.500-4M9 12v4M9 1.500V6l6 5M9 6l-6 4" stroke-width=".8"/></symbol>
<symbol id="isw" viewBox="0 0 18 18"><use href="#iso"/><path class="m" d="M2.500 7L9 12v4.500L2.500 10z"/></symbol>
<symbol id="ise" viewBox="0 0 18 18"><use href="#iso"/><path class="m" d="M15.500 8L9 12v4.500l6.500-5.500z"/></symbol>
<symbol id="ine" viewBox="0 0 18 18"><use href="#iso"/><path class="m" d="M9 1.500L15.500 8v3L9 6z"/></symbol>
<symbol id="inw" viewBox="0 0 18 18"><use href="#iso"/><path class="m" d="M9 1.500L2.500 7v3L9 6z"/></symbol>
<symbol id="cam" viewBox="0 0 18 18"><path class="g" d="M1.500 5.500h3l1-2h5l1 2h4v10h-14z"/><circle class="w" cx="8" cy="10" r="3.500"/><circle cx="8" cy="10" r="1.500"/><path stroke="#e8502a" stroke-width="2" d="M14 0v8M10 4h8M11 1l6 6M17 1l-6 6"/><circle fill="#ffd84a" stroke="none" cx="14" cy="4" r="2"/></symbol>
<symbol id="vprev" viewBox="0 0 18 18"><circle class="s" cx="8" cy="8" r="6.500"/><path class="k" d="M2 8l5-4v2.500h8v3H7V12z"/><path class="th" d="M12 12l5 5"/></symbol>
<symbol id="vs1" viewBox="0 0 18 18"><path class="w" d="M1.500 1.500h10v10h-10z"/><circle cx="11.500" cy="11.500" r="5"/></symbol>
<symbol id="vs2" viewBox="0 0 18 18"><circle class="w" cx="9" cy="9" r="7.500"/><path stroke-width=".9" d="M4 3l10 12M14 3L4 15M2 7c5-4 9-4 14 0M2 11c3 4 10 4 14 0"/></symbol>
<symbol id="vs3" viewBox="0 0 18 18"><circle class="w" cx="9" cy="9" r="7.500"/><path d="M4 3c2 6 5 10 10 12M14 3c-2 6-5 10-10 12"/></symbol>
<symbol id="vs4" viewBox="0 0 18 18"><circle fill="url(#gb)" stroke="none" cx="9" cy="9" r="7"/></symbol>
<symbol id="vs5" viewBox="0 0 18 18"><circle fill="url(#gy)" stroke="none" cx="9" cy="9" r="7"/></symbol>
<symbol id="vs6" viewBox="0 0 18 18"><circle class="s" cx="8" cy="8" r="7"/><path d="M2 10c4-6 8-6 12-5"/><path class="w" d="M8.500 9.500h9v7h-9z"/><path d="M10 12.500h6M10 14.500h6"/></symbol>
<symbol id="orb1" viewBox="0 0 18 18"><ellipse cx="9" cy="9" rx="7.500" ry="3"/><path class="w" d="M8 16V4H6.500L9 1l2.500 3H10v12z"/><path class="k" d="M1 12l4-3v5z"/></symbol>
<symbol id="orb2" viewBox="0 0 18 18"><circle class="g" cx="8" cy="10" r="5.500"/><path d="M1 15C3 7 12 2 17 3c0 5-7 12-16 12z"/><circle class="w" cx="14.500" cy="4" r="2.500"/></symbol>
<symbol id="orb3" viewBox="0 0 18 18"><use href="#orb2"/><path stroke="#222" stroke-width="2" d="M3 14l7-5M7 8h4v4"/></symbol>
<symbol id="erase" viewBox="0 0 18 18"><path stroke="#5a4016" stroke-width="5" d="M8 10l8-8"/><path stroke="#e8a84a" stroke-width="3" d="M9 9l7-7"/><circle fill="#d8502a" stroke="#7a2a12" cx="6" cy="12" r="2.800"/><path d="M1 16.500h14"/></symbol>
<symbol id="cp" viewBox="0 0 18 18"><circle class="w" cx="4" cy="4" r="3"/><circle class="b c" cx="10" cy="10" r="3.500"/><circle class="b c" cx="13.500" cy="13.500" r="3.500"/><path stroke="#222" stroke-width="1.500" d="M9 3.500h5v3M12 5l2 2.500L16.500 5"/></symbol>
<symbol id="mir" viewBox="0 0 18 18"><path class="g" d="M1.500 14.500L6.500 4v10.500z"/><path class="b c" d="M11.500 14.500V4l5 10.500z"/><path stroke="#222" d="M9 1v16"/></symbol>
<symbol id="off" viewBox="0 0 18 18"><path class="b c" d="M1.500 15.500v-3c0-3 4-1 4-4-2-8 9-8 7 0 0 3 4 1 4 4"/><path class="w" d="M17 15.500H4.500c0-2 4-1 4-5 0-6 2-4 1 0 0 4 1 3 7 3"/></symbol>
<symbol id="arr" viewBox="0 0 18 18"><path class="w" d="M1.500 1.500h6v6h-6z"/><path class="b c" d="M10.500 1.500h6v6h-6zM1.500 10.500h6v6h-6zM10.500 10.500h6v6h-6z"/></symbol>
<symbol id="move" viewBox="0 0 18 18"><path stroke="#333" stroke-width="1.500" d="M9 6V1M9 12v5M6 9H1M12 9h5M7 3l2-2 2 2M7 15l2 2 2-2M3 7L1 9l2 2M15 7l2 2-2 2"/><path class="w" d="M7.500 7.500h3v3h-3z"/></symbol>
<symbol id="rot" viewBox="0 0 18 18"><path stroke="#555" stroke-width="1.800" d="M6 3.500a6.800 6.800 0 1 0 6 0"/><path class="k" d="M5 1h6L8 6z"/></symbol>
<symbol id="scale" viewBox="0 0 18 18"><path class="b c" d="M1.500 1.500h15v15h-15z"/><path class="g" d="M1.500 7.500h9v9h-9z"/></symbol>
<symbol id="str" viewBox="0 0 18 18"><path class="b c" d="M9.500 1.500h3l5 15h-8z"/><path class="w" d="M1.500 1.500h8v15h-8z"/><path stroke="#111" d="M5 11.500h7M10 9l2.500 2.500L10 14"/></symbol>
<symbol id="trim" viewBox="0 0 18 18"><path stroke="#333" d="M0 8.500h7"/><path class="b" d="M6 16l5-14"/><path class="b" stroke-dasharray="3 1.500" d="M10 8.500h8"/></symbol>
<symbol id="extd" viewBox="0 0 18 18"><path stroke="#333" stroke-width="1.500" d="M0 9.500h7"/><path class="b" stroke-dasharray="2 1" d="M7 9.500h5"/><path class="b" d="M11 15l6-12"/></symbol>
<symbol id="bp" viewBox="0 0 18 18"><path class="g" stroke="none" d="M2 5h14v9H2z"/><path stroke="#333" d="M17 14.500H1.500v-10h15"/><path class="bf" d="M11 2.500h4v4h-4z"/></symbol>
<symbol id="brk" viewBox="0 0 18 18"><path class="g" stroke="none" d="M2 5h14v10H2z"/><path stroke="#333" d="M5 4.500H1.500v10h15v-10H13"/><path class="bf" d="M4 2.500h4v4H4zM11 2.500h4v4h-4z"/></symbol>
<symbol id="join" viewBox="0 0 18 18"><path stroke="#333" d="M1 9h16"/><path class="bf" d="M5 5.500L9 9l-4 3.500zM13 5.500L9 9l4 3.500z"/></symbol>
<symbol id="cham" viewBox="0 0 18 18"><path class="g" d="M1.500 16.500v-7l8-8h7v15z"/><path class="b" stroke-width="1.800" d="M1.500 9.500l8-8"/></symbol>
<symbol id="fil" viewBox="0 0 18 18"><path class="g" d="M1.500 16.500v-4c0-7 4-11 10-11h5v15z"/><path class="b" stroke-width="1.800" d="M1.500 12.500c0-7 4-11 10-11"/></symbol>
<symbol id="expl" viewBox="0 0 18 18"><path class="b c" d="M5.500 8.500l2-2h6v6l-2 3h-6zM2 6l8-4 2 2-8 2zM1 8l3-1v7l-3-1zM14 5l3-1v8l-3 2z"/></symbol>
<symbol id="do1" viewBox="0 0 18 18"><path class="w" d="M1.500 1.500h8v6h-8zM9.500 9.500h8v7h-8z"/><path fill="#a7adb6" d="M4.500 4.500h9v8h-9z"/></symbol>
<symbol id="do2" viewBox="0 0 18 18"><path fill="#a7adb6" d="M5.500 5.500h9v7h-9z"/><path class="w" d="M1.500 1.500h8v7h-8zM8.500 9.500h9v7h-9z"/></symbol>
<symbol id="do3" viewBox="0 0 18 18"><path class="w" d="M1.500 2.500h10v9h-10z"/><path fill="#a7adb6" d="M6.500 6.500h11v8h-11z"/></symbol>
<symbol id="do4" viewBox="0 0 18 18"><path fill="#a7adb6" d="M8.500 8.500h9v7h-9z"/><path class="g" d="M1.500 2.500h11v9h-11z"/></symbol>
<symbol id="snap" viewBox="0 0 18 18"><path stroke-dasharray="1 2" stroke="#222" d="M2 3.500h10M2 6.500h10M2 9.500h10M2 12.500h10"/><path stroke="#222" stroke-width="1.500" stroke-dasharray="7 2" d="M14 3v11"/></symbol>
<symbol id="grid" viewBox="0 0 18 18"><path class="w" stroke="#222" d="M1.500 1.500h15v15h-15zM1.500 4.500h15M1.500 7.500h15M1.500 10.500h15M1.500 13.500h15M4.500 1.500v15M7.500 1.500v15M10.500 1.500v15M13.500 1.500v15"/></symbol>
<symbol id="orth" viewBox="0 0 18 18"><path d="M2.500 1v15h15M2.500 9.500h6v6"/></symbol>
<symbol id="polar" viewBox="0 0 18 18"><path stroke="#222" d="M11 5.500a5 5 0 1 0 3 5.500M8 11h9M8 11l6-8M12 5c3 1 3 4 3 6"/></symbol>
<symbol id="osnap" viewBox="0 0 18 18"><path class="g" d="M4.500 4.500h12v12h-12z"/><circle fill="#fff" stroke="#e2582a" cx="3.500" cy="3.500" r="2"/></symbol>
<symbol id="otr" viewBox="0 0 18 18"><path stroke="#222" d="M16 14.500H3L13 3M9 8l3 3"/></symbol>
<symbol id="ducs" viewBox="0 0 18 18"><path d="M2.500 2v13h14M1 4l1.500-2L4 4M14.500 13l2 2-2 2M3 15L12 6"/><path class="or" d="M15 0l-5 6h4l-2 4 5-5h-3l3-4z"/></symbol>
<symbol id="dyn" viewBox="0 0 18 18"><path stroke="#111" stroke-width="1.500" d="M1 8h10M6 2v12"/><path class="w" stroke="#111" d="M10.500 9.500h6v4h-6z"/></symbol>
<symbol id="lwt" viewBox="0 0 18 18"><path stroke="#111" stroke-width="1.500" d="M2 9h14"/><path stroke="#111" stroke-width="2.500" d="M9 3v12"/></symbol>
<symbol id="model" viewBox="0 0 18 18"><path class="w" stroke="#222" d="M3.500 1.500h11v12h-11z"/><path d="M6 4v7h6zM1 16.500h16" stroke="#222"/></symbol>
<symbol id="qvl" viewBox="0 0 18 18"><path class="g" stroke="#222" d="M1.500 2.500h7v8h-7zM9.500 2.500h7v8h-7z"/><path class="w" stroke="#222" d="M1.500 13.500h15v3h-15z"/></symbol>
<symbol id="wheel" viewBox="0 0 18 18"><circle class="s" cx="9" cy="9" r="7.500"/><circle cx="9" cy="9" r="3.500"/><path d="M3.500 3.500l3 3M14.500 3.500l-3 3M3.500 14.500l3-3M14.500 14.500l-3-3"/><circle cx="9" cy="9" r="1"/></symbol>
<symbol id="show" viewBox="0 0 18 18"><path class="w" stroke="#222" d="M1.500 1.500h4v4h-4zM6.500 1.500h4v4h-4zM11.500 1.500h4v4h-4zM2.500 7.500h11v9h-11z"/><path class="k" d="M6 9l5 3-5 3z"/></symbol>
<symbol id="ann" viewBox="0 0 18 18"><path class="w" d="M9 1.500l2.500 9 5 4v2l-6-3H7.500l-6 3v-2l5-4z"/><path d="M9 9v3"/></symbol>
<symbol id="ann2" viewBox="0 0 18 18"><use href="#ann"/><circle fill="#ffd24a" stroke="#d8782a" cx="14" cy="9" r="3"/><path class="w" d="M13 12.500h2.500v4H13z"/></symbol>
<symbol id="ann3" viewBox="0 0 18 18"><path fill="#c2c2c2" stroke="#8c8c8c" d="M9 1.500l2.500 9 5 4v2l-6-3H7.500l-6 3v-2l5-4z"/><path stroke="#888" d="M2 4l4 2-4 3 5 1"/></symbol>
<symbol id="max" viewBox="0 0 18 18"><path class="g" stroke="#222" d="M2.500 2.500h13v13h-13z"/><path stroke="#222" stroke-width="2" d="M3 4h12"/></symbol>
<symbol id="grip" viewBox="0 0 18 18"><path stroke="#f2efe0" stroke-width="2.500" stroke-dasharray="2.500 1.500" d="M14.500 5v12M10.500 9v8M6.500 13v4"/></symbol>
<symbol id="bino" viewBox="0 0 18 18"><path class="g" d="M1.500 15.500V8l2-5h3l1.500 3v9.500zM10 15.500V6l1.500-3h3l2 5v7.500zM8 7h2v4H8z"/></symbol>
<symbol id="key" viewBox="0 0 18 18"><path stroke="#333" stroke-width="5" d="M7 7l9 9"/><path stroke="#fff" stroke-width="3" d="M7 7l9 9"/><circle class="w" cx="6" cy="6" r="4.500"/><circle cx="5" cy="5" r="1.300"/></symbol>
<symbol id="sat" viewBox="0 0 18 18"><path class="w" d="M2.500 4.500c0 6 6 10 11 8z"/><path class="w" d="M3 16.500l4-5 5 5z"/><path stroke-width="1.600" d="M8 8l6-6"/></symbol>
<symbol id="star" viewBox="0 0 18 18"><path class="w" stroke-width="1.300" d="M9 1.500l2.200 5.300 5.800.4-4.400 3.700 1.400 5.600L9 13.400l-5 3.100 1.400-5.600L1 7.200l5.800-.4z"/></symbol>
<symbol id="qm" viewBox="0 0 18 18"><circle class="w" cx="9" cy="9" r="7.500" stroke-width="1.600"/><path stroke-width="2" d="M6.500 7c0-3 5-3 5 0 0 1.500-2.500 2-2.500 3.500M9 12v2"/></symbol>
<symbol id="wmin" viewBox="0 0 18 18"><path class="w" d="M3.500 8.500h11v4h-11z"/></symbol>
<symbol id="wmax" viewBox="0 0 18 18"><path class="w" fill-rule="evenodd" d="M3.500 4.500h11v10h-11zM7 8h4v3H7z"/></symbol>
<symbol id="wres" viewBox="0 0 18 18"><path class="w" d="M6.500 2.500h9v9h-9z"/><path class="w" fill-rule="evenodd" d="M3.500 5.500h9v9h-9zM6 8.500h4v3H6z"/></symbol>
<symbol id="wx" viewBox="0 0 18 18"><path class="w" d="M3.500 4h4L9 6l1.500-2h4L11 9l3.500 5h-4L9 12l-1.500 2h-4L7 9z"/></symbol>
</svg>

<header class="head">
  <button class="logo" aria-label="菜单浏览器"><svg viewBox="0 0 40 38"><path fill="url(#gr)" stroke="#7d0d0d" d="M12 5l5-2 11 24-6 3-2-5-8 1-2 6-5-1z"/><path fill="#8d1012" d="M14 11l4 8-6 2z"/><path fill="#7d0a0c" d="M5 31l6-2 15-1 2-1-5 5-13 1z"/><path fill="#333" d="M30 16h6l-3 4z"/></svg></button>
  <div class="title">
    <div class="qat">
      <button aria-label="新建"><svg><use href="#new"/></svg></button><button aria-label="打开"><svg><use href="#open"/></svg></button><button aria-label="保存"><svg><use href="#save"/></svg></button><button aria-label="放弃"><svg><use href="#undo"/></svg></button><button class="ar dim" aria-label="放弃列表"></button><button aria-label="重做"><svg><use href="#redo"/></svg></button><button class="ar dim" aria-label="重做列表"></button><button aria-label="打印"><svg><use href="#print"/></svg></button><button class="ar bar" aria-label="自定义"></button>
    </div>
    <h1><span>T20天正建筑软件 V3.0 For AutoCAD 2010</span><span>Drawing1.dwg</span></h1>
    <div class="info">
      <button class="exp" aria-label="展开"></button><input type="search" aria-label="搜索" placeholder="鍵入关鍵字或短语"><button aria-label="搜索"><svg><use href="#bino"/></svg></button><button class="ar dim" aria-label="搜索选项"></button><button aria-label="速博"><svg><use href="#key"/></svg></button><button aria-label="通讯中心"><svg><use href="#sat"/></svg></button><button aria-label="收藏夹"><svg><use href="#star"/></svg></button><button aria-label="帮助"><svg><use href="#qm"/></svg></button><button class="ar dim" aria-label="帮助选项"></button>
    </div>
    <div class="win"><button aria-label="最小化"><svg><use href="#wmin"/></svg></button><button aria-label="最大化"><svg><use href="#wmax"/></svg></button><button class="x" aria-label="关闭"><svg><use href="#wx"/></svg></button></div>
  </div>
  <nav class="menu">
    <a href="#">文件(<u>F</u>)</a><a href="#">编辑(<u>E</u>)</a><a href="#">视图(<u>V</u>)</a><a href="#">插入(<u>I</u>)</a><a href="#">格式(<u>O</u>)</a><a href="#">工具(<u>T</u>)</a><a href="#">绘图(<u>D</u>)</a><a href="#">标注(<u>N</u>)</a><a href="#">修改(<u>M</u>)</a><a href="#">参数(<u>P</u>)</a><a href="#">窗口(<u>W</u>)</a><a href="#">帮助(<u>H</u>)</a>
    <div class="mdi"><button aria-label="最小化图形"><svg><use href="#wmin"/></svg></button><button aria-label="还原图形"><svg><use href="#wres"/></svg></button><button aria-label="关闭图形"><svg><use href="#wx"/></svg></button></div>
  </nav>
</header>

<main class="client">
<div class="rows">
<div class="row">
  <div class="tb"><button aria-label="新建"><svg><use href="#new"/></svg></button><button aria-label="打开"><svg><use href="#open"/></svg></button><button aria-label="保存"><svg><use href="#save"/></svg></button><hr><button aria-label="打印"><svg><use href="#print"/></svg></button><button aria-label="打印预览"><svg><use href="#preview"/></svg></button><button aria-label="发布"><svg><use href="#plot"/></svg></button><button aria-label="三维DWF"><svg><use href="#globe"/></svg></button><button aria-label="标记"><svg><use href="#markup"/></svg></button><hr><button aria-label="剪切"><svg><use href="#cut"/></svg></button><button aria-label="复制"><svg><use href="#copy"/></svg></button><button aria-label="粘贴"><svg><use href="#paste"/></svg></button><button aria-label="特性匹配"><svg><use href="#match"/></svg></button><button aria-label="块编辑器"><svg><use href="#bedit"/></svg></button><hr><button aria-label="放弃"><svg><use href="#undo"/></svg></button><button class="ar" aria-label="放弃列表"></button><button aria-label="重做"><svg><use href="#redo"/></svg></button><button class="ar dim" aria-label="重做列表"></button><hr><button aria-label="平移"><svg><use href="#pan"/></svg></button><button aria-label="缩放"><svg><use href="#zoom"/></svg></button><button aria-label="窗口缩放"><svg><use href="#zoomw"/></svg></button><button aria-label="缩放上一个"><svg><use href="#zoomp"/></svg></button><hr><button aria-label="特性"><svg><use href="#props"/></svg></button><button aria-label="设计中心"><svg><use href="#dc"/></svg></button><button aria-label="工具选项板"><svg><use href="#tp"/></svg></button><button aria-label="图纸集"><svg><use href="#ss"/></svg></button><button aria-label="标记集"><svg><use href="#ms"/></svg></button><button aria-label="计算器"><svg><use href="#calc"/></svg></button><hr><button aria-label="帮助"><svg><use href="#help"/></svg></button></div>
  <div class="tb"><button aria-label="文字样式管理"><svg><use href="#tstyle"/></svg></button><span class="sel w120 in1"><select aria-label="文字样式"><option>Standard</option></select></span><hr><button aria-label="标注样式管理"><svg><use href="#dstyle"/></svg></button><span class="sel w120 in1"><select aria-label="标注样式"><option>STANDARD</option></select></span><hr><button aria-label="表格样式管理"><svg><use href="#tbstyle"/></svg></button><span class="sel w120"><select aria-label="表格样式"><option>Standard</option></select></span><hr><button aria-label="多重引线样式管理"><svg><use href="#mlstyle"/></svg></button><span class="sel w120 in1"><select aria-label="多重引线样式"><option>Standard</option></select></span></div>
  <div class="tb"><button aria-label="直线"><svg><use href="#line"/></svg></button><button aria-label="构造线"><svg><use href="#xline"/></svg></button><button aria-label="多段线"><svg><use href="#pline"/></svg></button><button aria-label="多边形"><svg><use href="#polygon"/></svg></button><button aria-label="矩形"><svg><use href="#rect"/></svg></button><button aria-label="圆弧"><svg><use href="#arc"/></svg></button><button aria-label="圆"><svg><use href="#circle"/></svg></button><button aria-label="修订云线"><svg><use href="#cloud"/></svg></button><button aria-label="样条曲线"><svg><use href="#spline"/></svg></button><button aria-label="椭圆"><svg><use href="#ellipse"/></svg></button><button aria-label="椭圆弧"><svg><use href="#ellarc"/></svg></button><button aria-label="插入块"><svg><use href="#insert"/></svg></button><button aria-label="创建块"><svg><use href="#block"/></svg></button><button aria-label="点"><svg><use href="#point"/></svg></button><button aria-label="图案填充"><svg><use href="#hatch"/></svg></button><button aria-label="渐变色"><svg><use href="#grad"/></svg></button><button aria-label="面域"><svg><use href="#region"/></svg></button><button aria-label="表格"><svg><use href="#table"/></svg></button><button aria-label="多行文字"><svg><use href="#mtext"/></svg></button></div>
</div>
<div class="row">
  <div class="tb"><span class="sel w175"><select aria-label="工作空间"><option>AutoCAD 经典</option></select></span><button aria-label="工作空间设置"><svg><use href="#gear"/></svg></button><button aria-label="我的工作空间"><svg><use href="#wss"/></svg></button></div>
  <div class="tb"><button aria-label="图层"><svg><use href="#layers"/></svg></button><button aria-label="图层转换"><svg><use href="#lay2"/></svg></button><hr><button aria-label="关闭图层"><svg><use href="#bulb"/></svg></button><button aria-label="关闭选择"><svg><use href="#bulb2"/></svg></button><button aria-label="打开图层"><svg><use href="#bulby"/></svg></button><button aria-label="全部打开"><svg><use href="#bulbl"/></svg></button><button aria-label="冻结"><svg><use href="#frz"/></svg></button><button aria-label="冻结选择"><svg><use href="#frz2"/></svg></button><button aria-label="解冻"><svg><use href="#sun"/></svg></button><button aria-label="锁定"><svg><use href="#lock"/></svg></button><button aria-label="锁定选择"><svg><use href="#lock2"/></svg></button><button aria-label="解锁"><svg><use href="#unlock"/></svg></button><button aria-label="图层恢复"><svg><use href="#layl"/></svg></button><button aria-label="合并图层"><svg><use href="#layd"/></svg></button><button aria-label="编辑图层"><svg><use href="#laye"/></svg></button></div>
  <div class="tb"><button aria-label="图层特性"><svg><use href="#layp"/></svg></button><span class="sel w300"><span class="lay"><svg><use href="#bulby"/></svg><svg><use href="#sun"/></svg><svg><use href="#vp"/></svg><svg><use href="#plock"/></svg><i></i></span><select aria-label="图层"><option>0</option></select></span><button aria-label="置为当前"><svg><use href="#layc"/></svg></button><button aria-label="上一个图层"><svg><use href="#layb"/></svg></button><button aria-label="图层状态"><svg><use href="#layp"/></svg></button></div>
  <div class="tb sim"><span class="sel w149 in2"><span class="lay"><i></i></span><select aria-label="颜色"><option>ByLayer</option></select></span><hr><span class="sel w160 in4"><span class="ln"></span><select aria-label="线型"><option>ByLayer</option></select></span><hr><span class="sel w124 in3"><span class="ln"></span><select aria-label="线宽"><option>ByLayer</option></select></span><hr><span class="sel w120 off"><select aria-label="打印样式" disabled><option>BYCOLOR</option></select></span></div>
</div>
<div class="row">
  <div class="tb"><button aria-label="多段体"><svg><use href="#psolid"/></svg></button><button aria-label="长方体"><svg><use href="#box"/></svg></button><button aria-label="楔体"><svg><use href="#wedge"/></svg></button><button aria-label="圆锥体"><svg><use href="#cone"/></svg></button><button aria-label="球体"><svg><use href="#sphere"/></svg></button><button aria-label="圆柱体"><svg><use href="#cyl"/></svg></button><button aria-label="圆环体"><svg><use href="#torus"/></svg></button><button aria-label="棱锥体"><svg><use href="#pyr"/></svg></button><button aria-label="螺旋"><svg><use href="#helix"/></svg></button><button aria-label="平面曲面"><svg><use href="#mesh"/></svg></button><hr><button aria-label="拉伸"><svg><use href="#ext"/></svg></button><button aria-label="按住并拖动"><svg><use href="#ppull"/></svg></button><button aria-label="扫掠"><svg><use href="#sweep"/></svg></button><button aria-label="旋转建模"><svg><use href="#rev"/></svg></button><button aria-label="放样"><svg><use href="#loft"/></svg></button><hr><button aria-label="并集"><svg><use href="#union"/></svg></button><button aria-label="差集"><svg><use href="#sub"/></svg></button><button aria-label="交集"><svg><use href="#inter"/></svg></button><hr><button aria-label="三维移动"><svg><use href="#m3d"/></svg></button><button aria-label="三维旋转"><svg><use href="#r3d"/></svg></button><button aria-label="三维对齐"><svg><use href="#a3d"/></svg></button><button aria-label="三维阵列"><svg><use href="#ar3d"/></svg></button></div>
  <div class="tb"><button aria-label="实体并集"><svg><use href="#union"/></svg></button><button aria-label="实体差集"><svg><use href="#sub"/></svg></button><button aria-label="实体交集"><svg><use href="#inter"/></svg></button><hr><button aria-label="拉伸面"><svg><use href="#fext"/></svg></button><button aria-label="移动面"><svg><use href="#fmove"/></svg></button><button aria-label="偏移面"><svg><use href="#foff"/></svg></button><button aria-label="删除面"><svg><use href="#fdel"/></svg></button><button aria-label="旋转面"><svg><use href="#frot"/></svg></button><button aria-label="倾斜面"><svg><use href="#ftap"/></svg></button><button aria-label="复制面"><svg><use href="#fcopy"/></svg></button><button aria-label="着色面"><svg><use href="#fcol"/></svg></button><hr><button aria-label="复制边"><svg><use href="#ecopy"/></svg></button><button aria-label="着色边"><svg><use href="#fcol"/></svg></button><hr><button aria-label="压印"><svg><use href="#impr"/></svg></button><button aria-label="清除"><svg><use href="#clean"/></svg></button><button aria-label="分割"><svg><use href="#sep3"/></svg></button><button aria-label="抽壳"><svg><use href="#shell"/></svg></button><button aria-label="检查"><svg><use href="#chk3"/></svg></button></div>
  <div class="tb"><button aria-label="距离"><svg><use href="#dist"/></svg></button><button aria-label="面域质量"><svg><use href="#mreg"/></svg></button><hr><button aria-label="列表"><svg><use href="#list"/></svg></button><button aria-label="定位点"><svg><use href="#idp"/></svg></button></div>
</div>
</div>

<div class="work">
  <aside class="pal"><h2>T20...</h2>
    <ul><li><a href="#">设　　置</a></li><li><a href="#">轴网柱子</a></li><li><a href="#">墙　　体</a></li><li><a href="#">门　　窗</a></li><li><a href="#">房间屋顶</a></li><li><a href="#">楼梯其他</a></li><li><a href="#">立　　面</a></li><li><a href="#">剖　　面</a></li><li><a href="#">文字表格</a></li><li><a href="#">尺寸标注</a></li><li><a href="#">符号标注</a></li><li><a href="#">图层控制</a></li><li><a href="#">工　　具</a></li><li><a href="#">三维建模</a></li><li><a href="#">图块图案</a></li><li><a href="#">场地布置</a></li><li><a href="#">文件布图</a></li><li><a href="#">其　　它</a></li><li><a href="#">数据中心</a></li><li><a href="#">帮助演示</a></li></ul>
  </aside>
  <div class="right">
    <div class="upper">
      <div class="vcol"><div class="tb v"><button aria-label="线性"><svg><use href="#dim"/></svg></button><button aria-label="对齐"><svg><use href="#dal"/></svg></button><button aria-label="弧长"><svg><use href="#darc"/></svg></button><button aria-label="坐标"><svg><use href="#dord"/></svg></button><hr><button aria-label="半径"><svg><use href="#drad"/></svg></button><button aria-label="折弯"><svg><use href="#djog"/></svg></button><button aria-label="直径"><svg><use href="#ddia"/></svg></button><button aria-label="角度"><svg><use href="#dang"/></svg></button><hr><button aria-label="快速标注"><svg><use href="#dq"/></svg></button><button aria-label="基线"><svg><use href="#dbase"/></svg></button><button aria-label="连续"><svg><use href="#dcont"/></svg></button><button aria-label="等距标注"><svg><use href="#dspc"/></svg></button><button aria-label="折断标注"><svg><use href="#dbrk"/></svg></button><hr><button aria-label="公差"><svg><use href="#tol"/></svg></button><button aria-label="圆心标记"><svg><use href="#cmark"/></svg></button><button aria-label="检验"><svg><use href="#dins"/></svg></button><button aria-label="折弯线性"><svg><use href="#djl"/></svg></button><hr><button aria-label="编辑标注"><svg><use href="#ded"/></svg></button><button aria-label="编辑标注文字"><svg><use href="#dtx"/></svg></button><button aria-label="标注更新"><svg><use href="#dup"/></svg></button><hr><button aria-label="标注样式"><svg><use href="#dstyle"/></svg></button></div></div>
      <section class="frame" aria-label="绘图区">
        <div class="canvas">
          <svg class="ucs" width="130" height="140"><g fill="none" stroke="#fff"><path d="M5.500 114.500h13v13h-13zM12.500 114v-58M19 121.500h59"/><path d="M6.500 55.500l6-17 6 17zM78.500 115.500v12l16-6z"/><path stroke="#999" d="M10.500 55v-8M12.500 55V41M14.500 55v-8M79 119.500h10M79 121.500h14M79 123.500h10"/></g><text x="8" y="28">Y</text><text x="107" y="130">X</text></svg>
        </div>
        <div class="vsb"><i class="up"></i><b></b><i class="dn"></i></div>
        <div class="tabs"><button class="nv" aria-label="第一个"><svg viewBox="0 0 14 14"><path d="M4 2v9M10 2v9L5 6.500z"/></svg></button><button class="nv" aria-label="上一个"><svg viewBox="0 0 14 14"><path d="M10 2v9L5 6.500z"/></svg></button><button class="nv" aria-label="下一个"><svg viewBox="0 0 14 14"><path d="M5 2v9l5-4.500z"/></svg></button><button class="nv" aria-label="最后一个"><svg viewBox="0 0 14 14"><path d="M4 2v9l5-4.500zM11 2v9"/></svg></button><button class="tab on">模型</button><button class="tab">布局1</button><button class="tab">布局2</button><div class="hsb"><s></s><i class="lf"></i><em></em><b></b><i class="rt"></i></div></div>
        <div class="corner"></div>
      </section>
      <div class="vcol a">
        <div class="tb v"><button aria-label="命名视图"><svg><use href="#vw"/></svg></button><hr><button aria-label="俯视"><svg><use href="#cvt"/></svg></button><button aria-label="仰视"><svg><use href="#cvb"/></svg></button><button aria-label="左视"><svg><use href="#cvl"/></svg></button><button aria-label="右视"><svg><use href="#cvr"/></svg></button><button aria-label="前视"><svg><use href="#cvf"/></svg></button><button aria-label="后视"><svg><use href="#cvk"/></svg></button><hr><button aria-label="西南等轴测"><svg><use href="#isw"/></svg></button><button aria-label="东南等轴测"><svg><use href="#ise"/></svg></button><button aria-label="东北等轴测"><svg><use href="#ine"/></svg></button><button aria-label="西北等轴测"><svg><use href="#inw"/></svg></button><hr><button aria-label="相机"><svg><use href="#cam"/></svg></button><hr><button aria-label="上一个视图"><svg><use href="#vprev"/></svg></button></div>
        <div class="tb v"><button aria-label="二维线框"><svg><use href="#vs1"/></svg></button><hr><button aria-label="三维线框"><svg><use href="#vs2"/></svg></button><button aria-label="三维隐藏"><svg><use href="#vs3"/></svg></button><button aria-label="真实"><svg><use href="#vs4"/></svg></button><button aria-label="概念"><svg><use href="#vs5"/></svg></button><hr><button aria-label="视觉样式管理"><svg><use href="#vs6"/></svg></button></div>
        <div class="tb v"><button aria-label="受约束的动态观察"><svg><use href="#orb1"/></svg></button><button aria-label="自由动态观察"><svg><use href="#orb2"/></svg></button><button aria-label="连续动态观察"><svg><use href="#orb3"/></svg></button></div>
      </div>
      <div class="vcol c2">
        <div class="tb v"><button aria-label="删除"><svg><use href="#erase"/></svg></button><button aria-label="复制对象"><svg><use href="#cp"/></svg></button><button aria-label="镜像"><svg><use href="#mir"/></svg></button><button aria-label="偏移"><svg><use href="#off"/></svg></button><button aria-label="阵列"><svg><use href="#arr"/></svg></button><button aria-label="移动"><svg><use href="#move"/></svg></button><button aria-label="旋转"><svg><use href="#rot"/></svg></button><button aria-label="缩放对象"><svg><use href="#scale"/></svg></button><button aria-label="拉伸对象"><svg><use href="#str"/></svg></button><button aria-label="修剪"><svg><use href="#trim"/></svg></button><button aria-label="延伸"><svg><use href="#extd"/></svg></button><button aria-label="打断于点"><svg><use href="#bp"/></svg></button><button aria-label="打断"><svg><use href="#brk"/></svg></button><button aria-label="合并"><svg><use href="#join"/></svg></button><button aria-label="倒角"><svg><use href="#cham"/></svg></button><button aria-label="圆角"><svg><use href="#fil"/></svg></button><button aria-label="分解"><svg><use href="#expl"/></svg></button></div>
        <div class="tb v"><button aria-label="前置"><svg><use href="#do1"/></svg></button><button aria-label="后置"><svg><use href="#do2"/></svg></button><button aria-label="置于对象之上"><svg><use href="#do3"/></svg></button><button aria-label="置于对象之下"><svg><use href="#do4"/></svg></button></div>
      </div>
    </div>
    <section class="cmd" aria-label="命令行">
      <div class="hist"><p>COMMANDLINE</p><p><span>命令</span>: tshowbar</p></div>
      <div class="vsb"><i class="up"></i><i class="dn"></i></div>
      <label class="prompt"><span>命令</span>:<input type="text" aria-label="命令"></label>
      <div class="chs"><i class="lf"></i><b></b><em></em><i class="rt"></i></div>
    </section>
  </div>
</div>

<footer class="stat">
  <button class="scale">比例<span>1:100</span><i></i></button><div class="coord">-1309,&nbsp; -1516, 0</div>
  <button aria-label="捕捉"><svg><use href="#snap"/></svg></button><button aria-label="栅格"><svg><use href="#grid"/></svg></button><button aria-label="正交"><svg><use href="#orth"/></svg></button><button aria-label="极轴"><svg><use href="#polar"/></svg></button><button class="on" aria-label="对象捕捉"><svg><use href="#osnap"/></svg></button><button aria-label="对象追踪"><svg><use href="#otr"/></svg></button><button class="on" aria-label="动态UCS"><svg><use href="#ducs"/></svg></button><button aria-label="动态输入"><svg><use href="#dyn"/></svg></button><button aria-label="线宽"><svg><use href="#lwt"/></svg></button><button aria-label="快捷特性"><svg><use href="#qp"/></svg></button>
  <div class="grow"></div>
  <button aria-label="模型"><svg><use href="#model"/></svg></button><button aria-label="快速查看布局"><svg><use href="#qvl"/></svg></button><div class="gap"></div>
  <button aria-label="平移"><svg><use href="#pan"/></svg></button><button aria-label="缩放"><svg><use href="#zoom"/></svg></button><button aria-label="控制盘"><svg><use href="#wheel"/></svg></button><button aria-label="运动"><svg><use href="#show"/></svg></button><div class="gap"></div>
  <button class="wide"><svg><use href="#ann"/></svg><span>1:1</span><i></i></button><button aria-label="注释可见性"><svg><use href="#ann2"/></svg></button><button aria-label="自动缩放"><svg><use href="#ann3"/></svg></button><div class="gap s"></div>
  <button class="ws"><svg><use href="#gear"/></svg><span>AutoCAD</span>经典<i></i></button><button aria-label="锁定"><svg><use href="#ulock"/></svg></button><button class="t on">编组</button><button class="t">基线</button><button class="t">填充</button><button class="t">加粗</button><button class="t t4">动态标注</button><div class="gap s"></div><button class="nar" aria-label="状态栏菜单"><i></i></button><button aria-label="全屏显示"><svg><use href="#max"/></svg></button><div class="rs"><svg><use href="#grip"/></svg></div>
</footer>
</main>

<div class="mark" aria-hidden="true">
  <div class="m1"><span>Bai</span><svg viewBox="0 0 94 100"><mask id="mk"><rect width="94" height="100" fill="#fff"/><text x="21" y="86" fill="#000">du</text></mask><g fill="#fff"><ellipse cx="14" cy="38" rx="12" ry="15"/><ellipse cx="36" cy="16" rx="11" ry="15"/><ellipse cx="63" cy="18" rx="12" ry="15"/><ellipse cx="81" cy="45" rx="12" ry="15"/><path mask="url(#mk)" d="M47 41c9 0 13 7 20 14 8 8 19 12 19 26 0 13-11 19-20 18-7-1-12-2-19-2s-13 2-20 2C15 99 8 91 9 80c1-12 11-17 19-25 7-7 10-14 19-14z"/></g></svg><b>经验</b></div>
  <div class="m2">jingyan.baidu.com</div>
</div>
</body>
</html>
```
FILE: styles.css
```css
*, *::before, *::after { box-sizing: border-box; }
html, body { margin: 0; height: 100%; }
body {
  display: flex;
  flex-direction: column;
  padding: 0 8px 8px;
  position: relative;
  overflow: hidden;
  font: 12px/18px "Noto Sans", "Noto Sans CJK SC", sans-serif;
  color: #000;
  background:
    linear-gradient(90deg, #62dcff 0, #43c8fb 12%, #8feaff 35%, #7de4ff 64%, #2f9bf3 72%, #2380dd 90%, #1c6fca) bottom / 100% 8px no-repeat,
    linear-gradient(#2b70bf 0, #1a60b4 10%, #1653a0 40%, #1451a1 70%, #1b6bc8) right / 8px 100% no-repeat,
    linear-gradient(#2a6db8 0, #2b74c0 12%, #3f8fd0 22%, #1f7fd6 35%, #2a9cf0 50%, #4fc6f8 62%, #31bdfb 80%, #5bd8ff) left / 8px 100% no-repeat,
    #1b5fae;
}
button { padding: 0; border: 0; background: none; font: inherit; color: inherit; display: flex; align-items: center; justify-content: center; flex: none; }
svg { fill: none; stroke: #454c58; }
button svg { width: 18px; height: 18px; display: block; }
.defs { position: absolute; width: 0; height: 0; }
.g { fill: url(#gg); }
.s { fill: url(#gs); }
.w { fill: #fff; }
.k { fill: #2c3038; stroke: none; }
.m { fill: #818995; }
.b { stroke: #1467b3; }
.c { fill: #b4e0f8; }
.bf { fill: #1467b3; stroke: none; }
.or { fill: #f8a51c; stroke: #c05c10; stroke-width: .6; }
.th { stroke-width: 2.4; }

/* window header */
.head {
  display: grid;
  grid-template-columns: 41px 1fr;
  grid-template-rows: 31px 21px;
  margin: 0 -8px;
  padding: 0 8px;
  flex: none;
  border-top: 1px solid #0d2c5c;
  box-shadow: inset 0 1px #9cc4ee;
  border-radius: 6px 6px 0 0;
  background:
    radial-gradient(ellipse 24px 7px at 256px 7px, #16509a99, transparent),
    radial-gradient(ellipse 24px 7px at 256px 24px, #16509a99, transparent),
    radial-gradient(ellipse 26px 10px at 330px 8px, #7fb0e088, transparent),
    radial-gradient(ellipse 34px 7px at 328px 24px, #16509a99, transparent),
    linear-gradient(75deg, #2a6bb6 0, #1a66c0 12%, #1b68c2 30%, #2c7acc 50%, #1c64b6 62%, #1a5aa8 80%, #2d67ab 92%, #114287);
}
.logo { grid-area: 1 / 1 / 3 / 2; z-index: 1; width: 41px; height: 40px; margin-top: 8px; border: 1px solid #333; background: linear-gradient(#e2e2e2, #9b9b9b 50%, #7b7b7b); }
.logo svg { width: 39px; height: 38px; stroke: none; }
.title { grid-area: 1 / 2; display: flex; align-items: flex-start; min-width: 0; }
.qat { display: flex; align-items: center; height: 22px; margin-top: 8px; padding-left: 4px; width: 175px; border: 1px solid #333; border-bottom: 0; background: linear-gradient(#a6a6a6, #7f7f7f); }
.qat button { width: 23px; height: 22px; }
.ar::after { content: ""; border: 4px solid transparent; border-top: 4px solid #333; border-bottom: 0; }
.ar.dim::after { border-width: 3px 3px 0; border-top-color: #555; }
.tb .ar { width: 13px; }
.qat .ar { width: 9px; }
.qat .bar { width: 14px; flex-direction: column; gap: 1px; }
.ar.bar::after { border-top-color: #111; }
.ar.bar::before { content: ""; width: 8px; height: 2px; background: #111; }
h1 { flex: 1; margin: 0; padding: 6px 0 0 24px; display: flex; justify-content: center; gap: 24px; font: 12px/18px "Noto Sans", "Noto Sans CJK SC", sans-serif; white-space: nowrap; text-shadow: 0 0 6px #cfe4fa, 0 0 8px #cfe4fa, 0 0 10px #a9cdf2; }
.info { display: flex; height: 23px; margin-top: 4px; border: 1px solid #222; background: linear-gradient(#a2a2a2, #7c7c7c); }
.info button { width: 23px; height: 21px; }
.info .ar { width: 9px; }
.info .exp { width: 13px; }
.exp::after { content: ""; border: 4px solid transparent; border-left-color: #111; border-right: 0; }
.info input { width: 180px; border: 1px solid #ccc; background: #f7f7f7; padding: 0 3px; font: italic 12px "Noto Sans CJK SC", sans-serif; }
.info input::placeholder { color: #777; }
.win { display: flex; margin: 0 0 0 19px; height: 20px; border: 1px solid #a3c4ea; border-top: 0; border-radius: 0 0 5px 5px; background: #2b62a3aa; }
.win button { width: 28px; height: 18px; border-right: 1px solid #7fa5d2; }
.win .x { width: 46px; border: 0; }
.menu { grid-area: 2 / 1 / 3 / 3; display: flex; align-items: center; gap: 25px; padding-left: 55px; border-top: 1px solid #222; background: linear-gradient(#a0a0a0, #565656); }
.menu a { color: #fff; text-decoration: none; white-space: nowrap; }
.mdi { display: flex; margin-left: auto; }
.mdi button { width: 17px; }
.mdi svg { width: 16px; height: 16px; }

/* client */
.client { flex: 1; min-height: 0; display: flex; flex-direction: column; background: #676767; outline: 1px solid #9fd0f5; clip-path: inset(0 -1px -1px); }
.rows { display: flex; flex-direction: column; gap: 3px; }
.row { display: flex; }
.tb { display: flex; flex: none; align-items: center; height: 24px; border: 1px solid #333; background: #ebebeb; }
.tb::before { content: ""; align-self: stretch; width: 8px; flex: none; padding: 3px 2px; background: conic-gradient(from 270deg at 1px 1px, #111 25%, transparent 0) 0 0 / 2px 2px content-box content-box, #5f5f5f; }
.tb button { width: 23px; height: 22px; }
.tb hr { width: 1px; height: 18px; margin: 0 3px 0 2px; border: 0; background: #8b8b8b; flex: none; }
.tb.v { flex-direction: column; width: 25px; height: auto; }
.tb.v::before { width: 23px; height: 8px; padding: 2px 5px 2px 4px; }
.tb.v hr { width: 19px; height: 2px; margin: 2px 0; background: #a2a2a2; }
.tb.sim hr { width: 3px; margin: 0 2px; height: 20px; background: none; border: 1px solid #8b8b8b; border-width: 0 1px; }
.sel { position: relative; display: flex; height: 22px; flex: none; }
.sel::after { content: ""; position: absolute; right: 6px; top: 9px; border: 4px solid transparent; border-top: 4px solid #000; border-bottom: 0; pointer-events: none; }
.sel select { appearance: none; width: 100%; border: 1px solid #8a8a8a; border-radius: 3px; padding: 0 18px 0 4px; font: inherit; color: #000; background: linear-gradient(#f6f6f6, #dedede 50%, #d2d2d2); }
.w120 { width: 120px; } .w175 { width: 175px; } .w300 { width: 300px; } .w149 { width: 149px; } .w160 { width: 160px; } .w124 { width: 124px; }
.in1 select { padding-left: 18px; }
.w175 select { padding-left: 8px; }
.w300 select { padding-left: 85px; }
.in2 select { padding-left: 18px; }
.in4 select { padding-left: 69px; }
.in3 select { padding-left: 44px; }
.sim { font-family: "Liberation Serif", serif; }
.off select { color: #777; background: #f3f3f3; border-color: #ccc; padding-left: 9px; opacity: 1; font: 10px "Liberation Mono", monospace; }
.off::after { border-top-color: #aaa; }
.lay { position: absolute; left: 2px; top: 3px; display: flex; align-items: center; height: 16px; pointer-events: none; }
.lay svg { width: 16px; height: 16px; margin-right: 1px; }
.lay i { width: 10px; height: 10px; border: 1px solid #000; background: #fff; margin-left: 3px; }
.ln { position: absolute; left: 5px; top: 10px; height: 1px; background: #000; width: 60px; }
.in3 .ln { width: 35px; }

/* workspace */
.work { flex: 1; min-height: 0; display: flex; gap: 4px; padding-top: 3px; border-top: 1px solid #444; }
.pal { width: 84px; flex: none; display: flex; flex-direction: column; margin: 2px 0 3px; }
.pal h2 { margin: 0; height: 25px; padding: 3px 12px; font: 12px/18px "Noto Sans", sans-serif; background: conic-gradient(from 270deg at 1px 1px, #222 25%, transparent 0) 3px 3px / 2px 2px, #a1a1a1; background-repeat: repeat-y; border-radius: 4px 4px 0 0; }
.pal ul { flex: 1; margin: -3px 0 0; padding: 6px 0; list-style: none; background: #efefef; border-radius: 4px; }
.pal a { display: flex; align-items: center; gap: 15px; height: 18px; padding-left: 8px; color: #000; text-decoration: none; white-space: nowrap; }
.pal a::before { content: ""; border: 5px solid transparent; border-left: 5px solid #2d62a0; border-right: 0; }
.right { flex: 1; min-width: 0; display: flex; flex-direction: column; gap: 5px; }
.upper { flex: 1; min-height: 0; display: flex; gap: 4px; }
.vcol { display: flex; flex-direction: column; gap: 1px; }
.c2 { margin: 0 3px 0 -1px; }
.frame { flex: 1; min-width: 0; display: grid; grid-template: 1fr 16px / 1fr 18px; border: 1px solid #fff; border-width: 2px 1px 1px 2px; border-color: #a5a5a5 #fff #fff #a5a5a5; background: #f0f0f0; }
.canvas { background: #000; position: relative; }
.ucs { position: absolute; left: 8px; bottom: 3px; }
.ucs text { font: 300 22px "Open Sans", sans-serif; fill: #fff; stroke: none; }
.vsb { display: flex; flex-direction: column; align-items: center; justify-content: space-between; padding: 7px 0; background: #efefef; }
.frame .vsb b { width: 15px; height: 15px; margin-bottom: auto; margin-top: 55px; }
.vsb b, .hsb b, .chs b { border: 1px solid #999; border-radius: 2px; background: linear-gradient(90deg, #f4f4f4, #cdcdcd); }
i.up, i.dn, i.lf, i.rt { border: 4px solid transparent; flex: none; }
i.up { border-bottom-color: #333; border-top: 0; }
i.dn { border-top-color: #333; border-bottom: 0; }
i.lf { border-right-color: #333; border-left: 0; }
i.rt { border-left-color: #333; border-right: 0; }
.tabs { display: flex; border-top: 1px solid #888; height: 16px; line-height: 15px; }
.nv { width: 14px; border-right: 1px solid #aaa; }
.nv svg { width: 14px; height: 14px; stroke: #666; }
.nv path { fill: #666; }
.tab { position: relative; width: 46px; height: 15px; z-index: 0; }
.tab::before { content: ""; position: absolute; inset: 0 3px; z-index: -1; transform: skewX(-25deg); border-right: 1px solid #777; }
.tab.on { color: #fff; width: 44px; }
.tab.on::before { transform: none; inset: 0; background: #000; border: 0; clip-path: polygon(0 0, 100% 0, 88% 100%, 14% 100%); }
.hsb { margin-left: auto; width: 520px; display: flex; align-items: center; gap: 6px; padding-right: 6px; }
.hsb s { width: 5px; height: 12px; border: 1px solid #999; border-radius: 2px; }
.hsb em { flex: 1; }
.hsb b { width: 16px; height: 14px; margin-right: 10px; }
.cmd { height: 64px; flex: none; display: grid; grid-template: 46px 18px / 17px 1fr auto 16px; background: #fff; font: 13px/15px "Liberation Mono", monospace; }
.cmd::before { content: ""; grid-row: 1 / 3; border-right: 2px solid #ddd; padding: 3px 2px; background: conic-gradient(from 270deg at 1px 1px, #222 25%, transparent 0) 0 0 / 2px 2px content-box content-box, #a5a5a5; background-repeat: repeat-x; }
.cmd p { margin: 0; height: 15px; display: flex; align-items: center; }
.cmd span { font: 16px/15px "Noto Sans CJK SC", sans-serif; }
.hist { grid-column: 2 / 4; border-bottom: 1px solid #999; padding-top: 1px; }
.hist p { white-space: pre; }
.cmd .vsb { border-bottom: 1px solid #999; }
.prompt { grid-column: 2; display: flex; align-items: center; }
.prompt input { flex: 1; border: 0; outline: 0; font: inherit; background: none; padding: 0; }
.chs { grid-column: 3 / 5; width: 84px; display: flex; align-items: center; gap: 7px; padding: 0 24px 0 8px; background: linear-gradient(90deg, #f0f0f0 67px, #f7f7f7 67px); }
.chs b { width: 14px; height: 15px; }
.chs em { flex: 1; }

/* status bar */
.stat { flex: none; display: flex; height: 22px; border-top: 1px solid #111; padding-left: 4px; background: linear-gradient(#767676, #8f8f8f); font: 12px/20px "Noto Sans CJK SC", sans-serif; }
.stat button { width: 22px; border-right: 1px solid #555; background: linear-gradient(#bdbdbd, #9f9f9f); white-space: nowrap; }
.stat span { font: 10px/20px "Liberation Mono", monospace; }
.stat i { border: 4px solid transparent; border-top: 5px solid #000; border-bottom: 0; }
.stat .scale { width: 81px; gap: 7px; border-left: 1px solid #555; border-right: 0; }
.coord { width: 147px; padding-left: 7px; border-right: 1px solid #555; font: 10px/24px "Liberation Mono", monospace; color: #a8a8a8; white-space: nowrap; }
.stat .on { background: linear-gradient(#dff1f8, #a3d3e4); }
.grow { flex: 1; border-right: 1px solid #555; }
.gap { width: 18px; border-right: 1px solid #555; }
.gap.s { width: 6px; }
.stat .wide { width: 55px; gap: 3px; }
.stat .ws { width: 108px; gap: 4px; }
.stat .t { width: 30px; }
.stat .t4 { width: 54px; }
.stat .nar { width: 12px; }
.stat .nar i { border-width: 4px 3px 0; }
.rs { width: 17px; display: flex; align-items: flex-end; }
.rs svg { width: 17px; height: 17px; }

/* watermark */
.mark { position: absolute; right: 92px; bottom: 34px; opacity: .7; color: #fff; pointer-events: none; filter: drop-shadow(0 0 1px #8c8c8c) drop-shadow(0 0 1px #aaa); }
.m1 { display: flex; align-items: flex-end; height: 100px; margin-bottom: 8px; }
.m1 span { font: bold 70px/54px "Liberation Sans", sans-serif; }
.m1 svg { width: 94px; height: 100px; margin-left: -4px; stroke: none; }
.m1 svg text { font: bold 42px "Liberation Sans", sans-serif; stroke: none; }
.m1 b { font: 900 52px/60px "Noto Sans CJK SC", sans-serif; }
.m2 { font: 36px/44px "Noto Sans", sans-serif; }
```
